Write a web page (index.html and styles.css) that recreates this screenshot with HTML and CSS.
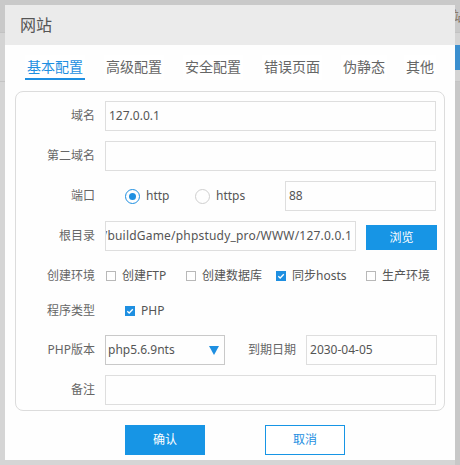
FILE: index.html
```html
<!DOCTYPE html>
<html lang="zh-CN">
<head>
<meta charset="utf-8">
<title>网站</title>
<link rel="stylesheet" href="styles.css">
</head>
<body>
<div class="backdrop">
  <div class="bd-top"><span class="bd-glyph">站</span></div>
  <div class="bd-band"><span class="bd-blue"></span></div>
  <div class="bd-rest"></div>
</div>

<div class="dialog">
  <div class="dlg-head">网站</div>

  <div class="tabs">
    <span class="tab active">基本配置</span>
    <span class="tab">高级配置</span>
    <span class="tab">安全配置</span>
    <span class="tab">错误页面</span>
    <span class="tab">伪静态</span>
    <span class="tab last">其他</span>
  </div>

  <div class="panel">
    <div class="row">
      <span class="label">域名</span>
      <div class="field">127.0.0.1</div>
    </div>
    <div class="row">
      <span class="label">第二域名</span>
      <div class="field"></div>
    </div>
    <div class="row">
      <span class="label">端口</span>
      <div class="radios">
        <span class="radio-item"><span class="radio on"></span>http</span>
        <span class="radio-item"><span class="radio"></span>https</span>
      </div>
      <div class="field">88</div>
    </div>
    <div class="row">
      <span class="label">根目录</span>
      <div class="field path"><span>/buildGame/phpstudy_pro/WWW/127.0.0.1</span></div>
      <span class="btn-browse">浏览</span>
    </div>
    <div class="row row-env">
      <span class="label">创建环境</span>
      <span class="chk-item w80"><span class="chk"></span>创建FTP</span>
      <span class="chk-item w90"><span class="chk"></span>创建数据库</span>
      <span class="chk-item w90"><span class="chk on"><svg viewBox="0 0 10 10" width="10" height="10"><polyline points="2.3,5.2 4.2,7 7.8,3.3" fill="none" stroke="#fff" stroke-width="1.3"/></svg></span>同步hosts</span>
      <span class="chk-item"><span class="chk"></span>生产环境</span>
    </div>
    <div class="row row-type">
      <span class="label">程序类型</span>
      <span class="chk-item indent"><span class="chk on"><svg viewBox="0 0 10 10" width="10" height="10"><polyline points="2.3,5.2 4.2,7 7.8,3.3" fill="none" stroke="#fff" stroke-width="1.3"/></svg></span>PHP</span>
    </div>
    <div class="row row-php">
      <span class="label">PHP版本</span>
      <div class="select">php5.6.9nts<span class="tri"></span></div>
      <span class="date-label">到期日期</span>
      <div class="field">2030-04-05</div>
    </div>
    <div class="row">
      <span class="label">备注</span>
      <div class="field"></div>
    </div>
  </div>

  <div class="actions">
    <span class="btn primary">确认</span>
    <span class="btn ghost">取消</span>
  </div>
</div>
</body>
</html>
```

FILE: styles.css
```css
html, body {
  margin: 0;
  padding: 0;
}
body {
  width: 460px;
  height: 465px;
  overflow: hidden;
  position: relative;
  background: #d2d2d2;
  font-family: "Noto Sans", "Noto Sans CJK SC", sans-serif;
  color: #666;
}

/* backdrop page behind the modal */
.backdrop {
  display: flex;
  flex-direction: column;
  height: 465px;
}
.bd-top {
  height: 32px;
  background: #c9c9c9;
  border-bottom: 1px solid #c2c2c2;
  position: relative;
}
.bd-glyph {
  position: absolute;
  left: 452px;
  top: 8px;
  font-size: 14px;
  line-height: 16px;
  color: #8a7a6a;
}
.bd-band {
  height: 48px;
  background: #d4d4d4;
  border-bottom: 1px solid #c4c4c4;
  position: relative;
}
.bd-blue {
  position: absolute;
  left: 455px;
  top: 12px;
  width: 5px;
  height: 25px;
  background: #3b8fcf;
}
.bd-rest {
  flex: 1;
  background: linear-gradient(to right, #d5d5d5 0 455px, #c8c8c8 455px);
}

/* modal dialog */
.dialog {
  position: absolute;
  left: 5px;
  top: 5px;
  width: 450px;
  height: 455px;
  background: #fefefe;
  display: flex;
  flex-direction: column;
}
.dlg-head {
  height: 40px;
  flex: none;
  background: #ebebeb;
  padding-left: 15px;
  font-size: 16px;
  line-height: 40px;
  color: #555;
}

.tabs {
  display: flex;
  gap: 19px;
  margin-top: 10px;
  padding-left: 20px;
  height: 25px;
  flex: none;
}
.tab {
  padding: 0 2px;
  font-size: 14px;
  line-height: 23px;
  height: 23px;
  color: #666;
  background: #fff;
  border-bottom: 2px solid transparent;
}
.tab.active {
  color: #1e8fe1;
  border-bottom-color: #1e8fe1;
}
.tab.last {
  margin-left: -2px;
}

.panel {
  margin: 11px 10px 0;
  height: 320px;
  box-sizing: border-box;
  border: 1px solid #dcdcdc;
  border-radius: 8px;
  padding: 9px 8px 0 0;
  flex: none;
}

.row {
  display: flex;
  align-items: center;
  height: 30px;
  margin-bottom: 10px;
}
.row-env { margin-top: 1px; margin-bottom: 5px; }
.row-type { margin-bottom: 9px; }

.label {
  width: 79px;
  flex: none;
  margin-right: 10px;
  text-align: right;
  font-size: 12px;
  line-height: 16px;
  color: #666;
}

.field {
  flex: 1;
  min-width: 0;
  height: 30px;
  box-sizing: border-box;
  border: 1px solid #dedede;
  padding: 0 3px;
  font-size: 12px;
  line-height: 28px;
  color: #555;
  white-space: nowrap;
  overflow: hidden;
}
.field.path {
  display: flex;
  justify-content: flex-end;
  margin-right: 10px;
  padding: 0 3px 0 0;
  letter-spacing: 0.2px;
}
.field.path span { flex: none; }

.btn-browse {
  width: 71px;
  height: 25px;
  flex: none;
  background: #1795e5;
  color: #fff;
  font-size: 12px;
  line-height: 25px;
  text-align: center;
  margin-top: 2px;
  margin-right: -1px;
}

.radios {
  width: 180px;
  flex: none;
  display: flex;
  padding-left: 20px;
  box-sizing: border-box;
}
.radio-item {
  width: 70px;
  display: flex;
  align-items: center;
  gap: 6px;
  font-size: 12px;
  line-height: 16px;
  color: #555;
}
.radio {
  width: 15px;
  height: 15px;
  box-sizing: border-box;
  border: 1px solid #cfcfcf;
  border-radius: 50%;
  display: flex;
  align-items: center;
  justify-content: center;
}
.radio.on {
  border-color: #1e8fe1;
}
.radio.on::after {
  content: "";
  width: 7px;
  height: 7px;
  border-radius: 50%;
  background: #1e8fe1;
}

.chk-item {
  display: flex;
  align-items: center;
  gap: 6px;
  font-size: 12px;
  line-height: 16px;
  color: #555;
  flex: none;
}
.w80 { width: 80px; }
.w90 { width: 90px; }
.chk-item .chk { margin-left: 1px; }
.chk-item.indent { padding-left: 19px; }
.chk {
  width: 10px;
  height: 10px;
  box-sizing: border-box;
  border: 1px solid #b8b8b8;
  display: flex;
  flex: none;
}
.chk.on {
  border: none;
  background: #1e8fe1;
}
.chk svg { display: block; }

.select {
  width: 120px;
  height: 30px;
  box-sizing: border-box;
  flex: none;
  border: 1px solid #c9c9c9;
  padding: 0 5px 0 2px;
  display: flex;
  align-items: center;
  justify-content: space-between;
  font-size: 12px;
  line-height: 16px;
  color: #555;
}
.tri {
  width: 0;
  height: 0;
  border-left: 5px solid transparent;
  border-right: 5px solid transparent;
  border-top: 9px solid #1e8fe1;
}
.date-label {
  margin-left: 23px;
  margin-right: 10px;
  font-size: 12px;
  line-height: 16px;
  color: #666;
  flex: none;
}
.row-php .field { margin-right: -1px; }

.actions {
  display: flex;
  gap: 60px;
  padding-left: 120px;
  margin-top: 14px;
}
.btn {
  width: 80px;
  height: 30px;
  box-sizing: border-box;
  font-size: 12px;
  line-height: 28px;
  text-align: center;
}
.btn.primary {
  background: #1795e5;
  border: 1px solid #1795e5;
  color: #fff;
}
.btn.ghost {
  background: #fff;
  border: 1px solid #1795e5;
  color: #1e8fe1;
}
```
